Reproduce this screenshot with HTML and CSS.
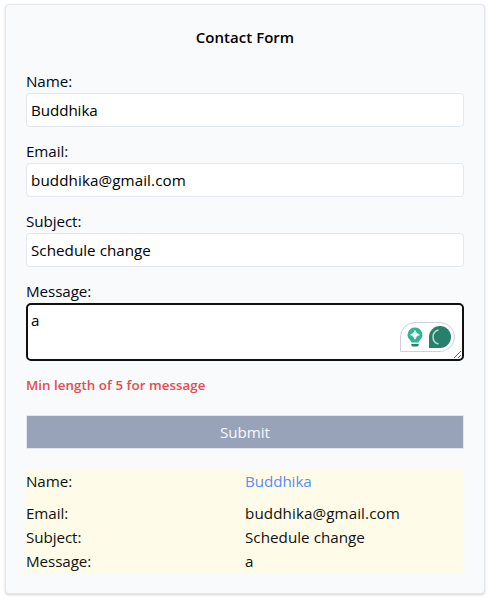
FILE: index.html
```html
<!DOCTYPE html>
<html lang="en">
<head>
<meta charset="utf-8">
<title>Contact Form</title>
<link rel="stylesheet" href="styles.css">
</head>
<body>
<form class="card">
  <h1 class="title">Contact Form</h1>
  <div class="field">
    <label for="name">Name:</label>
    <input class="control" id="name" type="text" value="Buddhika">
  </div>
  <div class="field">
    <label for="email">Email:</label>
    <input class="control email" id="email" type="text" value="buddhika@gmail.com">
  </div>
  <div class="field">
    <label for="subject">Subject:</label>
    <input class="control value" id="subject" type="text" value="Schedule change">
  </div>
  <div class="field">
    <label for="message">Message:</label>
    <textarea class="control area" id="message">a</textarea>
    <svg class="assistant" width="56" height="31" viewBox="0 0 56 31">
      <path d="M.5 29.500V15A14.500 14.500 0 0 1 15 .5H40A14.500 14.500 0 0 1 40 29.500H.5Z" fill="#fff" stroke="#cdd0e2"/>
      <path d="M15 5.500a7.300 7.300 0 0 0-4.700 12.900c.9.8 1.200 1.500 1.200 2.200h7c0-.7.3-1.400 1.200-2.200A7.300 7.300 0 0 0 15 5.500Z" fill="#34b394"/>
      <path d="M11.300 22h7.400v.4a2.200 2.200 0 0 1-2.200 2.200h-3a2.200 2.200 0 0 1-2.200-2.200Z" fill="#27806b"/>
      <path d="M15 8.400q.8 3.600 4.400 4.400-3.600.8-4.400 4.400-.8-3.600-4.400-4.400 3.600-.8 4.400-4.400Z" fill="#fff" stroke="#fff" stroke-width=".8"/>
      <path d="M29 26V15a11 11 0 1 1 11 11Z" fill="#27806b"/>
      <path d="M38.500 8a7.200 7.200 0 0 0 0 14" fill="none" stroke="#b5dcd2" stroke-width="1.500"/>
    </svg>
  </div>
  <p class="error">Min length of 5 for message</p>
  <button class="submit" type="button">Submit</button>
  <dl class="summary">
    <dt class="first">Name:</dt><dd class="first accent">Buddhika</dd>
    <dt>Email:</dt><dd class="email">buddhika@gmail.com</dd>
    <dt>Subject:</dt><dd class="value">Schedule change</dd>
    <dt>Message:</dt><dd>a</dd>
  </dl>
</form>
</body>
</html>
```
FILE: styles.css
```css
* { box-sizing: border-box; }
body {
  margin: 0;
  padding: 4px 5px;
  background: #fff;
  color: #020617;
  font: 15.2px/24px "Open Sans", sans-serif;
  letter-spacing: -0.08px;
}
.card {
  width: 480px;
  height: 590px;
  padding: 20px;
  border: 1px solid #e5e7eb;
  border-radius: 4px;
  background: #f8fafc;
  box-shadow: 0 1px 3px rgba(0, 0, 0, .1), 0 1px 2px rgba(0, 0, 0, .08);
}
.title {
  margin: 0 0 20px;
  font-size: 15px;
  font-weight: 600;
  line-height: 24px;
  letter-spacing: 0.03px;
  text-align: center;
  color: #000;
}
.field { position: relative; margin-bottom: 12px; }
.field label { display: block; }
.control {
  display: block;
  width: 100%;
  height: 34px;
  padding: 4px;
  border: 1px solid #e2e8f0;
  border-radius: 4px;
  background: #fff;
  color: #000;
  font: inherit;
  letter-spacing: inherit;
  outline: none;
}
.email { letter-spacing: 0.09px; }
.value { letter-spacing: 0.03px; }
.area {
  height: 58px;
  padding: 3px;
  border: 2px solid #101010;
  border-radius: 5px;
  resize: vertical;
}
.assistant { position: absolute; right: 8px; bottom: 8px; }
.error {
  margin: 0 0 18px;
  color: #e54b4f;
  font-size: 13.3px;
  font-weight: 600;
  line-height: 24px;
  letter-spacing: 0.06px;
}
.submit {
  display: block;
  width: 100%;
  height: 34px;
  margin-bottom: 20px;
  padding: 0;
  border: 1px solid #e2e8f0;
  background: #98a3ba;
  color: #f8fafc;
  font: inherit;
  font-weight: 500;
  letter-spacing: inherit;
}
.summary {
  display: grid;
  grid-template-columns: 1fr 1fr;
  margin: 0;
  background: #fefce8;
  color: #111;
}
.summary dd { margin: 0; }
.summary .first { margin-bottom: 8px; }
.summary .accent { color: #5b8df5; }
```
